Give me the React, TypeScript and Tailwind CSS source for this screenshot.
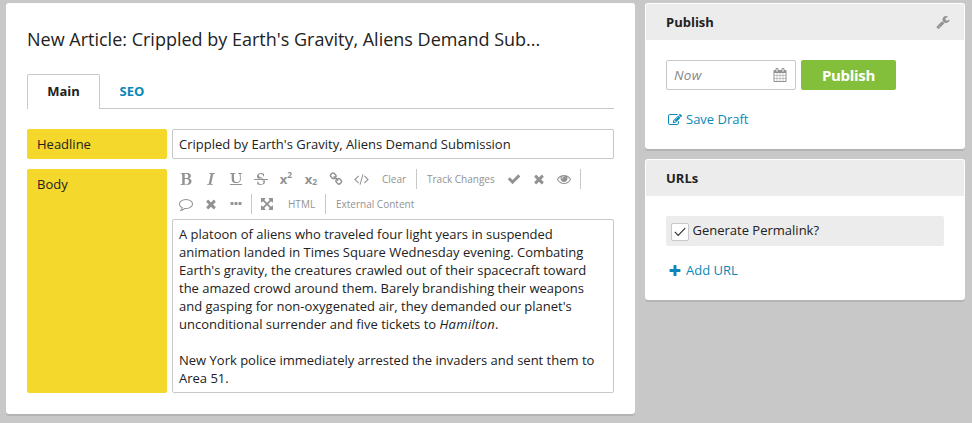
import type { ReactNode } from "react";

const PATHS = {
  bold: "M747 1521q74 32 140 32 376 0 376-335 0-114-41-180-27-44-61.5-74t-67.5-46.5-80.5-25-84-10.5-94.5-2q-73 0-101 10 0 53-.5 159t-.5 158q0 8-1 67.5t-.5 96.5 4.5 83.5 12 66.5zm-14-746q42 7 109 7 82 0 143-13t110-44.5 74.5-89.5 25.5-142q0-70-29-122.5t-79-82-108-43.5-124-14q-50 0-130 13 0 50 4 151t4 152q0 27-.5 80t-.5 79q0 46 1 69zm-541 889l2-94q15-4 85-16t106-27q7-12 12.5-27t8.5-33.5 5.5-32.5 3-37.5.5-34v-65.5q0-982-22-1025-4-8-22-14.5t-44.5-11-49.5-7-48.5-4.5-30.5-3l-4-83q98-2 340-11.5t373-9.5q23 0 68 .5t68 .5q70 0 136.5 13t128.5 42 108 71 74 104.5 28 137.5q0 52-16.5 95.5t-39 72-64.5 57.5-73 45-84 40q154 35 256.5 134t102.5 248q0 100-35 179.5t-93.5 130.5-138 85.5-163.5 48.5-176 14q-44 0-132-3t-132-3q-106 0-307 11t-231 12z",
  italic: "M384 1662l17-85q6-2 81.5-21.5t111.5-37.5q28-35 41-101 1-7 62-289t114-543.5 52-296.5v-25q-24-13-54.5-18.5t-69.5-8-58-5.5l19-103q33 2 120 6.5t149.5 7 120.5 2.5q48 0 98.5-2.5t121-7 98.5-6.5q-5 39-19 89-30 10-101.5 28.5t-108.5 33.5q-8 19-14 42.5t-9 40-7.5 45.5-6.5 42q-27 148-87.5 419.5t-77.5 355.5q-2 9-13 58t-20 90-16 83.5-6 57.5l1 18q17 4 185 31-3 44-16 99-11 0-32.5 1.5t-32.5 1.5q-29 0-87-10t-86-10q-138-2-206-2-51 0-143 9t-121 11z",
  underline: "M176 223q-37-2-45-4l-3-88q13-1 40-1 60 0 112 4 132 7 166 7 86 0 168-3 116-4 146-5 56 0 86-2l-1 14 2 64v9q-60 9-124 9-60 0-79 25-13 14-13 132 0 13 .5 32.5t.5 25.5l1 229 14 280q6 124 51 202 35 59 96 92 88 47 177 47 104 0 191-28 56-18 99-51 48-36 65-64 36-56 53-114 21-73 21-229 0-79-3.5-128t-11-122.5-13.5-159.5l-4-59q-5-67-24-88-34-35-77-34l-100 2-14-3 2-86h84l205 10q76 3 196-10l18 2q6 38 6 51 0 7-4 31-45 12-84 13-73 11-79 17-15 15-15 41 0 7 1.5 27t1.5 31q8 19 22 396 6 195-15 304-15 76-41 122-38 65-112 123-75 57-182 89-109 33-255 33-167 0-284-46-119-47-179-122-61-76-83-195-16-80-16-237v-333q0-188-17-213-25-36-147-39zm1488 1409v-64q0-14-9-23t-23-9h-1472q-14 0-23 9t-9 23v64q0 14 9 23t23 9h1472q14 0 23-9t9-23z",
  strike: "M1760 896q14 0 23 9t9 23v64q0 14-9 23t-23 9h-1728q-14 0-23-9t-9-23v-64q0-14 9-23t23-9h1728zm-1277-64q-28-35-51-80-48-97-48-188 0-181 134-309 133-127 393-127 50 0 167 19 66 12 177 48 10 38 21 118 14 123 14 183 0 18-5 45l-12 3-84-6-14-2q-50-149-103-205-88-91-210-91-114 0-182 59-67 58-67 146 0 73 66 140t279 129q69 20 173 66 58 28 95 52h-743zm507 256h411q7 39 7 92 0 111-41 212-23 55-71 104-37 35-109 81-80 48-153 66-80 21-203 21-114 0-195-23l-140-40q-57-16-72-28-8-8-8-22v-13q0-108-2-156-1-30 0-68l2-37v-44l102-2q15 34 30 71t22.5 56 12.5 27q35 57 80 94 43 36 105 57 59 22 132 22 64 0 139-27 77-26 122-86 47-61 47-129 0-84-81-157-34-29-137-71z",
  check: "M1671 566q0 40-28 68l-724 724-136 136q-28 28-68 28t-68-28l-136-136-362-362q-28-28-28-68t28-68l136-136q28-28 68-28t68 28l294 295 656-657q28-28 68-28t68 28l136 136q28 28 28 68z",
  times: "M1490 1322q0 40-28 68l-136 136q-28 28-68 28t-68-28l-294-294-294 294q-28 28-68 28t-68-28l-136-136q-28-28-28-68t28-68l294-294-294-294q-28-28-28-68t28-68l136-136q28-28 68-28t68 28l294 294 294-294q28-28 68-28t68 28l136 136q28 28 28 68t-28 68l-294 294 294 294q28 28 28 68z",
  plus: "M1600 736v192q0 40-28 68t-68 28h-416v416q0 40-28 68t-68 28h-192q-40 0-68-28t-28-68v-416h-416q-40 0-68-28t-28-68v-192q0-40 28-68t68-28h416v-416q0-40 28-68t68-28h192q40 0 68 28t28 68v416h416q40 0 68 28t28 68z",
  dots: "M576 736v192q0 40-28 68t-68 28h-192q-40 0-68-28t-28-68v-192q0-40 28-68t68-28h192q40 0 68 28t28 68zm512 0v192q0 40-28 68t-68 28h-192q-40 0-68-28t-28-68v-192q0-40 28-68t68-28h192q40 0 68 28t28 68zm512 0v192q0 40-28 68t-68 28h-192q-40 0-68-28t-28-68v-192q0-40 28-68t68-28h192q40 0 68 28t28 68z",
  eye: "M1664 960q-152-236-381-353 61 104 61 225 0 185-131.5 316.5t-316.5 131.5-316.5-131.5-131.5-316.5q0-121 61-225-229 117-381 353 133 205 333.5 326.5t434.5 121.5 434.5-121.5 333.5-326.5zm-720-384q0-20-14-34t-34-14q-125 0-214.5 89.5t-89.5 214.5q0 20 14 34t34 14 34-14 14-34q0-86 61-147t147-61q20 0 34-14t14-34zm848 384q0 34-20 69-140 230-376.5 368.5t-499.5 138.5-499.5-139-376.5-368q-20-35-20-69t20-69q140-229 376.5-368t499.5-139 499.5 139 376.5 368q20 35 20 69z",
  wrench: "M448 1472q0-26-19-45t-45-19-45 19-19 45 19 45 45 19 45-19 19-45zm644-420l-682 682q-37 37-90 37-52 0-91-37l-106-108q-38-36-38-90 0-53 38-91l681-681q39 98 114.5 173.5t173.5 114.5zm634-435q0 39-23 106-47 134-164.5 217.5t-258.5 83.5q-185 0-316.5-131.5t-131.5-316.5 131.5-316.5 316.5-131.5q58 0 121.5 16.5t107.5 46.5q16 11 16 28t-16 28l-293 169v224l193 107q5-3 79-48.5t135.5-81 70.5-35.5q15 0 23.5 10t8.5 25z",
  calendar: "M192 1664h288v-288h-288v288zm352 0h320v-288h-320v288zm-352-352h288v-320h-288v320zm352 0h320v-320h-320v320zm-352-384h288v-288h-288v288zm736 736h320v-288h-320v288zm-384-736h320v-288h-320v288zm768 736h288v-288h-288v288zm-384-352h320v-320h-320v320zm-352-864v-288q0-13-9.5-22.5t-22.5-9.5h-64q-13 0-22.5 9.5t-9.5 22.5v288q0 13 9.5 22.5t22.5 9.5h64q13 0 22.5-9.5t9.5-22.5zm736 864h288v-320h-288v320zm-384-384h320v-288h-320v288zm384 0h288v-288h-288v288zm32-480v-288q0-13-9.5-22.5t-22.5-9.5h-64q-13 0-22.5 9.5t-9.5 22.5v288q0 13 9.5 22.5t22.5 9.5h64q13 0 22.5-9.5t9.5-22.5zm384-64v1280q0 52-38 90t-90 38h-1408q-52 0-90-38t-38-90v-1280q0-52 38-90t90-38h128v-96q0-66 47-113t113-47h64q66 0 113 47t47 113v96h384v-96q0-66 47-113t113-47h64q66 0 113 47t47 113v96h128q52 0 90 38t38 90z",
  edit: "M888 1184l116-116-152-152-116 116v56h96v96h56zm440-720q-16-16-33 1l-350 350q-17 17-1 33t33-1l350-350q17-17 1-33zm80 594v190q0 119-84.5 203.5t-203.5 84.5h-832q-119 0-203.5-84.5t-84.5-203.5v-832q0-119 84.5-203.5t203.5-84.5h832q63 0 117 25 15 7 18 23 3 17-9 29l-49 49q-14 14-32 8-23-6-45-6h-832q-66 0-113 47t-47 113v832q0 66 47 113t113 47h832q66 0 113-47t47-113v-126q0-13 9-22l64-64q15-15 35-7t20 29zm-96-738l288 288-672 672h-288v-288zm444 132l-92 92-288-288 92-92q28-28 68-28t68 28l152 152q28 28 28 68t-28 68z",
  comment: "M896 384q-204 0-381.5 69.5t-282 187.5-104.5 255q0 112 71.5 213.5t201.5 175.5l87 50-27 96q-24 91-70 172 152-63 275-171l43-38 57 6q69 8 130 8 204 0 381.5-69.5t282-187.5 104.5-255-104.5-255-282-187.5-381.5-69.5zm896 512q0 174-120 321.5t-326 233-450 85.5q-70 0-145-8-198 175-460 242-49 14-114 22h-5q-15 0-27-10.5t-16-27.5v-1q-3-4-.5-12t2-10 4.5-9.5l6-9 7-8.5 8-9q7-8 31-34.5t34.5-38 31-39.5 32.5-51 27-59 26-76q-157-89-247.5-220t-90.5-281q0-130 71-248.5t191-204.5 286-136.5 348-50.5 348 50.5 286 136.5 191 204.5 71 248.5z",
  expand: "M1411 541l-355 355 355 355 144-144q29-31 70-14 39 17 39 59v448q0 26-19 45t-45 19h-448q-42 0-59-40-17-39 14-69l144-144-355-355-355 355 144 144q31 30 14 69-17 40-59 40h-448q-26 0-45-19t-19-45v-448q0-42 40-59 39-17 69 14l144 144 355-355-355-355-144 144q-19 19-45 19-12 0-24-5-40-17-40-59v-448q0-26 19-45t45-19h448q42 0 59 40 17 39-14 69l-144 144 355 355 355-355-144-144q-31-30-14-69 17-40 59-40h448q26 0 45 19t19 45v448q0 42-39 59-13 5-25 5-26 0-45-19z",
  link: "M1520 1216q0-40-28-68l-208-208q-28-28-68-28-42 0-72 32 3 3 19 18.5t21.5 21.5 15 19 13 25.5 3.5 27.5q0 40-28 68t-68 28q-15 0-27.5-3.5t-25.5-13-19-15-21.5-21.5-18.5-19q-33 31-33 73 0 40 28 68l206 207q27 27 68 27 40 0 68-26l147-146q28-28 28-67zm-703-705q0-40-28-68l-206-207q-28-28-68-28-39 0-68 27l-147 146q-28 28-28 67 0 40 28 68l208 208q27 27 68 27 42 0 72-31-3-3-19-18.5t-21.5-21.5-15-19-13-25.5-3.5-27.5q0-40 28-68t68-28q15 0 27.5 3.5t25.5 13 19 15 21.5 21.5 18.5 19q33-31 33-73zm895 705q0 120-85 203l-147 146q-83 83-203 83-121 0-204-85l-206-207q-83-83-83-203 0-123 88-209l-88-88q-86 88-208 88-120 0-204-84l-208-208q-84-84-84-204t85-203l147-146q83-83 203-83 121 0 204 85l206 207q83 83 83 203 0 123-88 209l88 88q86-88 208-88 120 0 204 84l208 208q84 84 84 204z",
  code: "M617 1399l-50 50q-10 10-23 10t-23-10l-466-466q-10-10-10-23t10-23l466-466q10-10 23-10t23 10l50 50q10 10 10 23t-10 23l-393 393 393 393q10 10 10 23t-10 23zm591-1067l-373 1291q-4 13-15.5 19.5t-23.5 2.5l-62-17q-13-4-19.5-15.5t-2.5-24.5l373-1291q4-13 15.5-19.5t23.5-2.5l62 17q13 4 19.5 15.5t2.5 24.5zm657 651l-466 466q-10 10-23 10t-23-10l-50-50q-10-10-10-23t10-23l393-393-393-393q-10-10-10-23t10-23l50-50q10-10 23-10t23 10l466 466q10 10 10 23t-10 23z",
};

type IconName = keyof typeof PATHS;

function Icon({ name, className = "w-3.5 h-3.5" }: { name: IconName; className?: string }) {
  return (
    <svg
      viewBox={name === "code" ? "0 0 1920 1792" : "0 0 1792 1792"}
      className={`block shrink-0 fill-current ${className}`}
      aria-hidden="true"
    >
      <path d={PATHS[name]} />
    </svg>
  );
}

function Tool({ name, className }: { name: IconName; className?: string }) {
  return (
    <button className="flex h-5 w-[25px] items-center justify-center">
      <Icon name={name} className={className} />
    </button>
  );
}

function Script({ raised }: { raised?: boolean }) {
  return (
    <button className="flex h-5 w-[25px] items-center justify-center text-[13px] leading-5 font-bold">
      <span className="-mt-px">x</span>
      <span className={raised ? "-mt-[8px] text-[8.5px]" : "mt-[6px] text-[8.5px]"}>2</span>
    </button>
  );
}

function TextTool({ children, className = "" }: { children: ReactNode; className?: string }) {
  return <button className={`h-5 text-left text-[10px] leading-5 whitespace-nowrap ${className}`}>{children}</button>;
}

function Separator({ className }: { className: string }) {
  return <div className={`h-5 w-px shrink-0 bg-[#c8c8c8] ${className}`} />;
}

function Toolbar() {
  return (
    <div className="h-[50px] pl-[1.5px] text-[#929292]">
      <div className="flex h-[25px]">
        <Tool name="bold" />
        <Tool name="italic" />
        <Tool name="underline" />
        <Tool name="strike" />
        <Script raised />
        <Script />
        <Tool name="link" />
        <Tool name="code" className="h-3.5 w-[15px]" />
        <TextTool className="w-[42.5px] pl-[8.5px]">Clear</TextTool>
        <Separator className="mr-2.5" />
        <TextTool className="w-[74.5px]">Track Changes</TextTool>
        <Tool name="check" />
        <Tool name="times" />
        <Tool name="eye" />
        <Separator className="ml-[3.5px]" />
      </div>
      <div className="flex h-[25px]">
        <Tool name="comment" />
        <Tool name="times" />
        <Tool name="dots" />
        <Separator className="mr-[2.5px] ml-[2.5px]" />
        <Tool name="expand" />
        <TextTool className="w-[45.5px] pl-[8.5px]">HTML</TextTool>
        <Separator className="mr-2.5" />
        <TextTool>External Content</TextTool>
      </div>
    </div>
  );
}

function Panel({ title, action, className, children }: { title: string; action?: ReactNode; className: string; children: ReactNode }) {
  return (
    <section className={`rounded-[3px] bg-white p-px shadow-[0_2px_0_#b4b4b4] ${className}`}>
      <header className="flex h-9 items-center justify-between rounded-t-[2px] bg-[#ececec] pr-[14px] pl-5">
        <h2 className="text-[13px] leading-5 font-bold">{title}</h2>
        {action}
      </header>
      <div className="px-5 pt-5">{children}</div>
    </section>
  );
}

export default function App() {
  return (
    <div className="flex h-[423px] w-[972px] items-start gap-2.5 bg-[#c8c8c8] pt-[3px] pl-1.5 font-['Open_Sans',sans-serif] text-[13px] text-[#222]">
      <main className="h-[411px] w-[629px] rounded-[3px] bg-white px-[21px] pt-6 shadow-[0_2px_0_#b4b4b4]">
        <h1 className="h-[47px] text-[18px] leading-[25px] whitespace-nowrap">
          New Article: Crippled by Earth's Gravity, Aliens Demand Sub...
        </h1>
        <nav className="flex h-[35px] border-b border-[#c8c8c8] font-bold">
          <a className="h-[35px] w-[73px] rounded-t-[2px] border border-b-0 border-[#c8c8c8] bg-white text-center leading-[33px]">Main</a>
          <a className="pl-[19.5px] leading-[35px] text-[#0a87b8]">SEO</a>
        </nav>
        <div className="mt-5 flex gap-[5px]">
          <label className="h-[30px] w-[140px] rounded-[2px] bg-[#f4d82c] pl-2.5 leading-[30px]">Headline</label>
          <div className="h-[30px] w-[442px] rounded-[2px] border border-[#c8c8c8] px-1.5 leading-7">
            Crippled by Earth's Gravity, Aliens Demand Submission
          </div>
        </div>
        <div className="mt-2.5 flex gap-[5px]">
          <label className="h-[224px] w-[140px] rounded-[2px] bg-[#f4d82c] pl-2.5 leading-[30px]">Body</label>
          <div className="w-[442px]">
            <Toolbar />
            <div className="h-[174px] rounded-[2px] border border-[#c8c8c8] px-1.5 pt-[5px] leading-[18px] whitespace-nowrap">
              <p>
                A platoon of aliens who traveled four light years in suspended
                <br />
                animation landed in Times Square Wednesday evening. Combating
                <br />
                Earth's gravity, the creatures crawled out of their spacecraft toward
                <br />
                the amazed crowd around them. Barely brandishing their weapons
                <br />
                and gasping for non-oxygenated air, they demanded our planet's
                <br />
                unconditional surrender and five tickets to <em className="tracking-[0.3px]">Hamilton</em>.
              </p>
              <p className="mt-[18px]">
                New York police immediately arrested the invaders and sent them to
                <br />
                Area 51.
              </p>
            </div>
          </div>
        </div>
      </main>

      <aside className="flex w-80 flex-col gap-2.5">
        <Panel title="Publish" className="h-[146px]" action={<Icon name="wrench" className="h-3.5 w-3.5 text-[#929292]" />}>
          <div className="flex gap-[5px]">
            <div className="flex h-[30px] w-[130px] items-center justify-between rounded-[2px] border border-[#c8c8c8] pr-2 pl-[7px] text-[#888]">
              <span className="text-[13.5px] tracking-[0.3px] italic">Now</span>
              <Icon name="calendar" className="h-3.5 w-3.5 text-[#929292]" />
            </div>
            <button className="h-[30px] w-[95px] rounded-[2px] bg-[#84bf3b] text-[15px] leading-[30px] font-bold tracking-[-0.3px] text-white">Publish</button>
          </div>
          <a className="mt-5 flex items-center gap-1 pl-[2px] text-[#0a87b8]">
            <Icon name="edit" className="h-3.5 w-3.5" />
            Save Draft
          </a>
        </Panel>
        <Panel title="URLs" className="h-[141px]">
          <label className="flex h-[30px] rounded-[2px] bg-[#ececec] pt-[7px] pl-[5px]">
            <span className="flex h-[18px] w-[18px] items-center justify-center rounded-[2px] border border-[#c8c8c8] bg-white">
              <svg viewBox="0 0 12 10" className="h-2.5 w-3 fill-none stroke-[#333] stroke-[1.2]">
                <path d="M.8 4.8 4.2 8.4 11.2 1.2" />
              </svg>
            </span>
            <span className="-mt-0.5 ml-[3.5px] leading-[18px]">Generate Permalink?</span>
          </label>
          <a className="mt-[15px] flex items-center gap-1 pl-[2px] text-[#0a87b8]">
            <Icon name="plus" className="h-3.5 w-3.5" />
            Add URL
          </a>
        </Panel>
      </aside>
    </div>
  );
}
